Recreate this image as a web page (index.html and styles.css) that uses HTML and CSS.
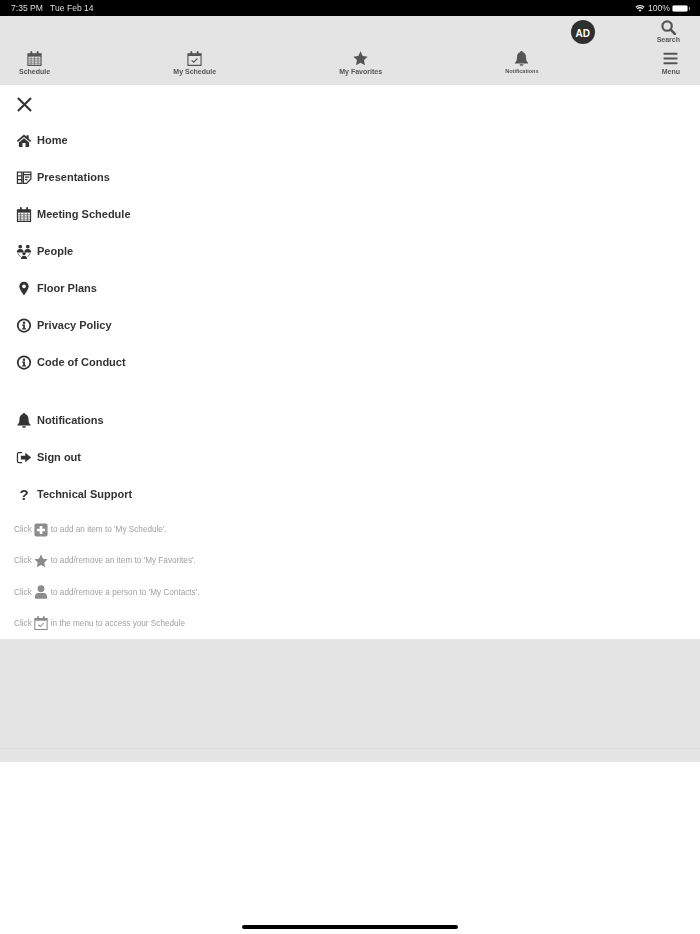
FILE: index.html
```html
<!DOCTYPE html>
<html lang="en">
<head>
    <meta charset="UTF-8">
    <meta name="viewport" content="width=device-width, initial-scale=1.0">
    <title>Menu</title>
    <link rel="stylesheet" href="styles.css">
</head>
<body>

    <!-- shared icons -->
    <svg class="icon-defs" aria-hidden="true">
        <symbol id="i-calendar" viewBox="0 0 24 24">
            <path d="M1.500 4.500h21v18.500h-21z" fill="none" stroke="currentColor" stroke-width="1.800"/>
            <path d="M1.500 4.500h21v4.500h-21z" fill="currentColor"/>
            <path d="M7 1.500v5M17 1.500v5" stroke="currentColor" stroke-width="3" stroke-linecap="round"/>
            <path d="M6.500 9v13M12 9v13M17.500 9v13M2 12.500h20M2 16h20M2 19.500h20" stroke="currentColor" stroke-width="1" fill="none"/>
        </symbol>
        <symbol id="i-check-cal" viewBox="0 0 24 24">
            <path d="M1.500 4.500h21v18.500h-21z" fill="none" stroke="currentColor" stroke-width="1.800"/>
            <path d="M1.500 4.500h21v3.500h-21z" fill="currentColor"/>
            <path d="M7 1.500v5M17 1.500v5" stroke="currentColor" stroke-width="3" stroke-linecap="round"/>
            <path d="M7.500 15l3.200 3 6-6" stroke="currentColor" stroke-width="1.800" fill="none"/>
        </symbol>
        <symbol id="i-star" viewBox="0 0 24 24">
            <path d="M12 .5l3.500 7.500 8 1-5.900 5.500 1.500 8.200L12 18.700l-7.100 4 1.500-8.200L.5 9l8-1z" fill="currentColor"/>
        </symbol>
        <symbol id="i-bell" viewBox="0 0 24 24">
            <path d="M12 0c1.200 0 2 .8 2 2 3.600.8 5.200 3.700 5.200 7.500 0 5 1.200 7.400 3.300 9.300V20h-21v-1.200c2.100-1.900 3.300-4.300 3.300-9.300C4.800 5.700 6.400 2.800 10 2c0-1.200.8-2 2-2z" fill="currentColor"/>
            <path d="M9 21h6c0 1.500-1.300 2.700-3 2.700S9 22.500 9 21z" fill="currentColor"/>
        </symbol>
        <symbol id="i-info" viewBox="0 0 24 24">
            <circle cx="12" cy="12" r="10" fill="none" stroke="currentColor" stroke-width="2.800"/>
            <circle cx="12" cy="7.500" r="2" fill="currentColor"/>
            <path d="M9 10.500h4.500v6h1.700v2H9v-2h1.600v-4H9z" fill="currentColor"/>
        </symbol>
    </svg>

    <div class="status-bar">
        <span class="status-time">7:35 PM&nbsp;&nbsp; Tue Feb 14</span>
        <span class="status-right">
            <svg class="wifi" viewBox="0 0 16 12"><path d="M8 11.500L5.700 8.900a3.400 3.400 0 0 1 4.600 0zM3.900 7.200L2.600 5.700a8.200 8.200 0 0 1 10.800 0l-1.300 1.500a6.200 6.200 0 0 0-8.200 0zM1.500 4.500L.2 3a12 12 0 0 1 15.600 0l-1.300 1.500a10 10 0 0 0-13 0z" fill="#fff"/></svg>
            <span>100%</span>
            <span class="battery"><span class="battery-fill"></span></span>
        </span>
    </div>

    <header class="top-header">
        <div class="header-top">
            <div class="avatar">AD</div>
            <div class="search-item">
                <svg class="search-icon" viewBox="0 0 16 16"><circle cx="6.500" cy="6.500" r="5" fill="none" stroke="currentColor" stroke-width="2.300"/><path d="M10.300 10.300L15 15" stroke="currentColor" stroke-width="2.800" stroke-linecap="round"/></svg>
                <span class="search-label">Search</span>
            </div>
        </div>
        <nav class="header-nav">
            <div class="nav-item"><svg class="nav-icon"><use href="#i-calendar"/></svg><span>Schedule</span></div>
            <div class="nav-item"><svg class="nav-icon"><use href="#i-check-cal"/></svg><span>My Schedule</span></div>
            <div class="nav-item"><svg class="nav-icon"><use href="#i-star"/></svg><span>My Favorites</span></div>
            <div class="nav-item"><svg class="nav-icon"><use href="#i-bell"/></svg><span class="small-label">Notifications</span></div>
            <div class="nav-item">
                <svg class="nav-icon" viewBox="0 0 16 16"><path d="M1.500 3h13M1.500 8h13M1.500 13h13" stroke="currentColor" stroke-width="2.200" stroke-linecap="round"/></svg>
                <span>Menu</span>
            </div>
        </nav>
    </header>

    <main class="menu">
        <svg class="close-icon" viewBox="0 0 16 16"><path d="M1 1l14 14M15 1L1 15" stroke="currentColor" stroke-width="2.200"/></svg>

        <ul class="menu-list">
            <li class="menu-item">
                <svg class="menu-icon" viewBox="0 0 24 24"><path d="M12 2.500L.5 12.500l1.700 2L12 6.200l9.800 8.300 1.700-2-4-3.500V3.500h-3.500v2.600zM3.800 15.300L12 8.300l8.200 7v6.200a1 1 0 0 1-1 1h-4.700v-6.500h-5v6.500H4.800a1 1 0 0 1-1-1z" fill="currentColor"/></svg>
                Home
            </li>
            <li class="menu-item">
                <svg class="menu-icon" viewBox="0 0 24 24"><path d="M1.500 3.500h7v18h-7zM1.500 9.500h7M1.500 15.500h7M11 3.500h12v11l-7 7h-5zM11 7.500h12M13.500 11.500h7M13.500 15.500h4" fill="none" stroke="currentColor" stroke-width="2"/></svg>
                Presentations
            </li>
            <li class="menu-item"><svg class="menu-icon"><use href="#i-calendar"/></svg>Meeting Schedule</li>
            <li class="menu-item">
                <svg class="menu-icon" viewBox="0 0 24 24">
                    <path d="M6 7a3 3 0 1 0 0-6 3 3 0 0 0 0 6zM18 7a3 3 0 1 0 0-6 3 3 0 0 0 0 6zM.5 13.500C.5 9.800 2.500 8 6 8s5.500 1.800 5.500 5.500zM12.500 13.500c0-3.700 2-5.500 5.500-5.500s5.500 1.800 5.500 5.500zM12 18a2.800 2.800 0 1 0 0-5.600 2.800 2.800 0 0 0 0 5.600zM7 24c0-3.300 1.800-5.300 5-5.300s5 2 5 5.300z" fill="currentColor"/>
                    <path d="M2.500 15c.5 2.500 2 4 4 4.800M21.500 15c-.5 2.500-2 4-4 4.800" fill="none" stroke="currentColor" stroke-width="1.200"/>
                </svg>
                People
            </li>
            <li class="menu-item">
                <svg class="menu-icon" viewBox="0 0 24 24"><path fill-rule="evenodd" d="M12 1c4.600 0 7.500 3.400 7.500 7.500 0 4.500-4.800 11-7.500 14.500-2.700-3.500-7.500-10-7.500-14.500C4.500 4.400 7.400 1 12 1zm0 4.500a3 3 0 1 0 0 6 3 3 0 0 0 0-6z" fill="currentColor"/></svg>
                Floor Plans
            </li>
            <li class="menu-item"><svg class="menu-icon"><use href="#i-info"/></svg>Privacy Policy</li>
            <li class="menu-item"><svg class="menu-icon"><use href="#i-info"/></svg>Code of Conduct</li>
        </ul>

        <ul class="menu-list second-list">
            <li class="menu-item"><svg class="menu-icon"><use href="#i-bell"/></svg>Notifications</li>
            <li class="menu-item">
                <svg class="menu-icon" viewBox="0 0 24 24"><path d="M9 4H4a2.500 2.500 0 0 0-2.500 2.500v11A2.500 2.500 0 0 0 4 20h5" fill="none" stroke="currentColor" stroke-width="2"/><path d="M7 9h7V4.500l9.500 7.500-9.500 7.500V15H7z" fill="currentColor"/></svg>
                Sign out
            </li>
            <li class="menu-item"><span class="question-mark menu-icon">?</span>Technical Support</li>
        </ul>

        <div class="hints">
            <p class="hint">Click
                <svg class="hint-icon" viewBox="0 0 16 16"><path fill-rule="evenodd" d="M2.500.5h11a2 2 0 0 1 2 2v11a2 2 0 0 1-2 2h-11a2 2 0 0 1-2-2v-11a2 2 0 0 1 2-2zm4 2.800v3.200H3.300v3h3.200v3.200h3V9.500h3.200v-3H9.500V3.300z" fill="currentColor"/></svg>
                to add an item to 'My Schedule'.</p>
            <p class="hint">Click <svg class="hint-icon"><use href="#i-star"/></svg> to add/remove an item to 'My Favorites'.</p>
            <p class="hint">Click
                <svg class="hint-icon" viewBox="0 0 16 16"><path d="M8 8.200a3.900 3.900 0 1 0 0-7.800 3.900 3.900 0 0 0 0 7.800zM1 13.500c0-3 1.800-4.500 3.800-4.500h6.400c2 0 3.800 1.500 3.800 4.500v1a1.200 1.200 0 0 1-1.200 1.200H2.200A1.200 1.200 0 0 1 1 14.500z" fill="currentColor"/></svg>
                to add/remove a person to 'My Contacts'.</p>
            <p class="hint">Click <svg class="hint-icon"><use href="#i-check-cal"/></svg> in the menu to access your Schedule</p>
        </div>
    </main>

    <div class="gray-panel"><div class="panel-line"></div></div>

    <div class="home-area"><div class="home-bar"></div></div>

</body>
</html>
```

FILE: styles.css
```css
/* General Styling */
html, body {
    height: 100%;
}

body {
    background-color: #fff;
    color: #333;
    display: flex;
    flex-direction: column;
    font-family: "Liberation Sans", Arial, sans-serif;
    height: 934px;
    margin: 0;
    overflow: hidden;
}

.icon-defs {
    display: none;
}

/* Text sits in its own layer so it gets plain grey antialiasing */
.status-time,
.status-right,
.header-top,
.header-nav,
.menu-list,
.hints {
    will-change: opacity;
}

/* Status bar */
.status-bar {
    align-items: center;
    background-color: #000;
    color: #ddd;
    display: flex;
    flex: 0 0 16px;
    font-size: 8.600px;
    justify-content: space-between;
    padding: 0 12px 0 11px;
}

.status-right {
    align-items: center;
    display: flex;
    gap: 2px;
}

.wifi {
    height: 7px;
    margin-right: 1px;
    width: 10px;
}

.battery {
    border: 1px solid #999;
    border-radius: 2px;
    display: block;
    height: 5px;
    position: relative;
    width: 14px;
}

.battery::after {
    background-color: #999;
    content: "";
    height: 3px;
    position: absolute;
    right: -3px;
    top: 1px;
    width: 1px;
}

.battery-fill {
    background-color: #fff;
    display: block;
    height: 100%;
}

/* Header */
.top-header {
    background-color: #e4e4e4;
    display: flex;
    flex: 0 0 69px;
    flex-direction: column;
}

.header-top {
    align-items: flex-start;
    box-sizing: border-box;
    display: flex;
    height: 33px;
    justify-content: flex-end;
    padding: 4px 20px 0 0;
}

.avatar {
    align-items: center;
    background-color: #2f2f2f;
    border-radius: 50%;
    box-sizing: border-box;
    color: #fff;
    display: flex;
    font-size: 10px;
    font-weight: bold;
    height: 24px;
    justify-content: center;
    margin-right: 62px;
    padding-top: 2px;
    width: 24px;
}

.search-item {
    align-items: center;
    color: #555;
    display: flex;
    flex-direction: column;
}

.search-icon {
    height: 15px;
    width: 15px;
}

.search-label {
    font-size: 7px;
    font-weight: bold;
    margin-top: 1px;
}

.header-nav {
    align-items: flex-start;
    display: flex;
    justify-content: space-between;
    padding: 2px 20px 0 19px;
}

.nav-item {
    align-items: center;
    color: #555;
    display: flex;
    flex-direction: column;
    font-size: 7px;
    font-weight: bold;
    height: 28px;
}

.nav-icon {
    flex: none;
    height: 15px;
    margin-bottom: 1px;
    width: 15px;
}

.nav-item span {
    line-height: 9px;
}

.nav-item .small-label {
    font-size: 5.500px;
}

/* Menu */
.menu {
    box-sizing: border-box;
    flex: 0 0 554px;
    padding: 12px 0 0 14px;
}

.close-icon {
    display: block;
    height: 15px;
    margin: 0 0 0 3px;
    width: 15px;
}

.menu-list {
    list-style: none;
    margin: 9px 0 0;
    padding: 0;
}

.second-list {
    margin-top: 21px;
}

.menu-item {
    align-items: center;
    display: flex;
    font-size: 11px;
    font-weight: bold;
    height: 37px;
}

.menu-icon {
    flex: none;
    height: 15px;
    margin: 2px 5px 0 2px;
    width: 16px;
}

.question-mark {
    font-size: 15px;
    line-height: 16px;
    text-align: center;
}

/* Hints */
.hints {
    color: #a0a0a0;
    font-size: 8.200px;
    margin-top: 2px;
}

.hint {
    align-items: center;
    display: flex;
    gap: 2.500px;
    height: 31.250px;
    margin: 0;
}

.hint-icon {
    color: #8c8c8c;
    flex: none;
    height: 14px;
    width: 14px;
}

/* Bottom */
.gray-panel {
    background-color: #e4e4e4;
    box-sizing: border-box;
    flex: 0 0 123px;
    padding-top: 109px;
}

.panel-line {
    background-color: #dedede;
    height: 1px;
}

.home-area {
    align-items: flex-end;
    display: flex;
    flex: 1;
    justify-content: center;
    padding-bottom: 5px;
}

.home-bar {
    background-color: #000;
    border-radius: 2px;
    height: 4px;
    width: 216px;
}
```
